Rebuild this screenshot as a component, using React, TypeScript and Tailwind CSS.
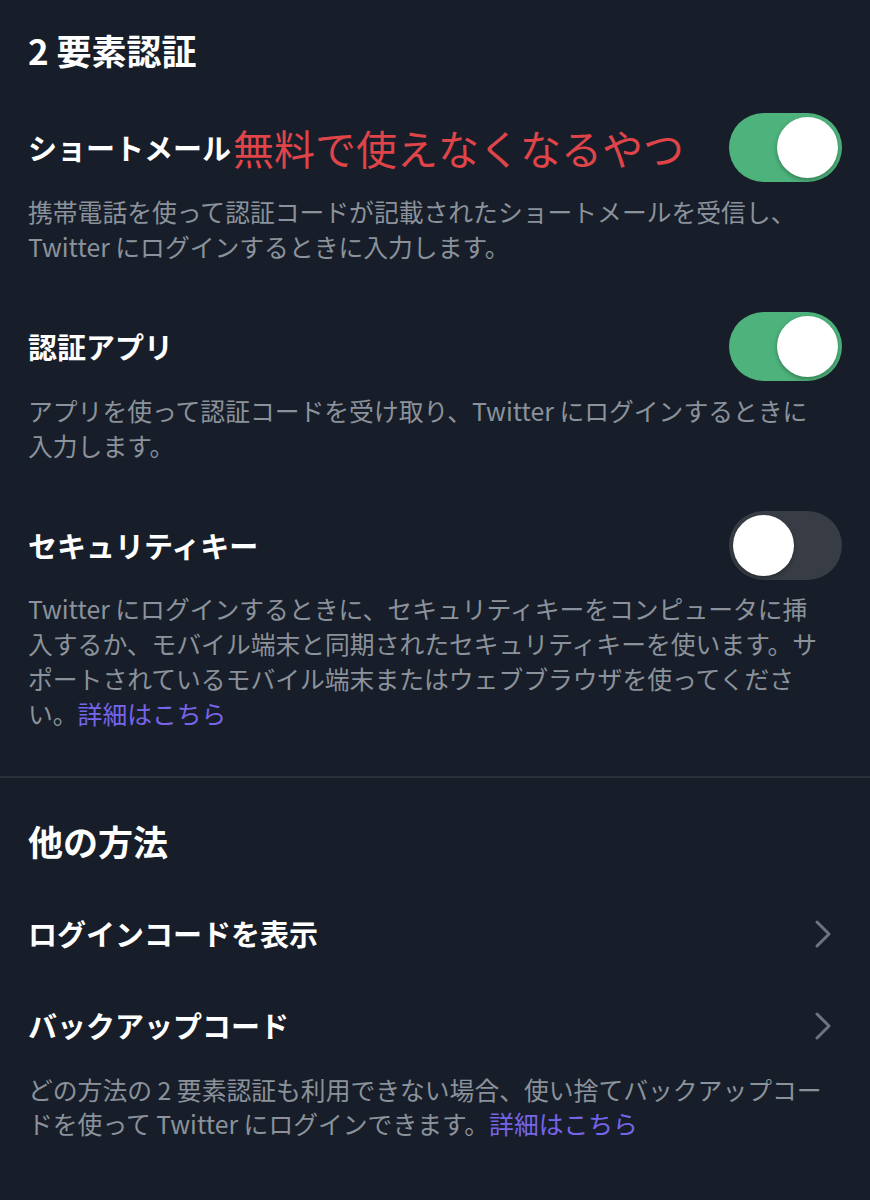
import React from 'react';

const font = { fontFamily: '"Noto Sans CJK JP", "Noto Sans", sans-serif' };

function Toggle({ on }: { on: boolean }) {
  return (
    <div
      className={`flex items-center w-[113px] h-[69px] rounded-full px-[4px] shrink-0 ${
        on ? 'bg-[#4db27b] justify-end' : 'bg-[#383d45] justify-start'
      }`}
    >
      <div className="w-[61px] h-[61px] rounded-full bg-white shadow-[0_2px_4px_rgba(0,0,0,0.3)]" />
    </div>
  );
}

function Chevron() {
  return (
    <svg width="18" height="30" viewBox="0 0 18 30" className="shrink-0 mr-[10px]">
      <path d="M3 3 L15 15 L3 27" fill="none" stroke="#6b7480" strokeWidth="3" strokeLinecap="round" strokeLinejoin="round" />
    </svg>
  );
}

function Link() {
  return <span className="text-[#7664ea]">詳細はこちら</span>;
}

export default function App() {
  return (
    <div className="min-h-[1200px] w-[870px] bg-[#171e29] text-white" style={font}>
      <div className="px-[28px] pt-[28px]">
        <h1 className="text-[35px] font-bold leading-[44px]">2 要素認証</h1>

        {/* SMS */}
        <div className="mt-[41px] flex items-center justify-between h-[69px]">
          <div className="flex items-center">
            <span className="text-[29px] font-bold">ショートメール</span>
            <span className="text-[41px] text-[#df4449] ml-[2px]">無料で使えなくなるやつ</span>
          </div>
          <Toggle on />
        </div>
        <p className="mt-[12px] text-[24.8px] leading-[35px] text-[#8b929b] whitespace-nowrap">
          携帯電話を使って認証コードが記載されたショートメールを受信し、
          <br />
          Twitter にログインするときに入力します。
        </p>

        {/* App */}
        <div className="mt-[48px] flex items-center justify-between h-[69px]">
          <span className="text-[29px] font-bold">認証アプリ</span>
          <Toggle on />
        </div>
        <p className="mt-[12px] text-[24.8px] leading-[35px] text-[#8b929b] whitespace-nowrap">
          アプリを使って認証コードを受け取り、Twitter にログインするときに
          <br />
          入力します。
        </p>

        {/* Security key */}
        <div className="mt-[48px] flex items-center justify-between h-[69px]">
          <span className="text-[29px] font-bold">セキュリティキー</span>
          <Toggle on={false} />
        </div>
        <p className="mt-[11px] text-[24.8px] leading-[35px] text-[#8b929b] whitespace-nowrap">
          Twitter にログインするときに、セキュリティキーをコンピュータに挿
          <br />
          入するか、モバイル端末と同期されたセキュリティキーを使います。サ
          <br />
          ポートされているモバイル端末またはウェブブラウザを使ってくださ
          <br />
          い。<Link />
        </p>
      </div>

      <div className="mt-[45px] h-[2px] bg-[#2a313b]" />

      <div className="px-[28px] pt-[41px]">
        <h2 className="text-[35px] font-bold leading-[44px]">他の方法</h2>

        <div className="mt-[25px] flex items-center justify-between h-[92px]">
          <span className="text-[29px] font-bold">ログインコードを表示</span>
          <Chevron />
        </div>
        <div className="flex items-center justify-between h-[92px]">
          <span className="text-[29px] font-bold">バックアップコード</span>
          <Chevron />
        </div>
        <p className="text-[24.8px] leading-[34px] text-[#8b929b] whitespace-nowrap">
          どの方法の 2 要素認証も利用できない場合、使い捨てバックアップコー
          <br />
          ドを使って Twitter にログインできます。<Link />
        </p>
      </div>
    </div>
  );
}
